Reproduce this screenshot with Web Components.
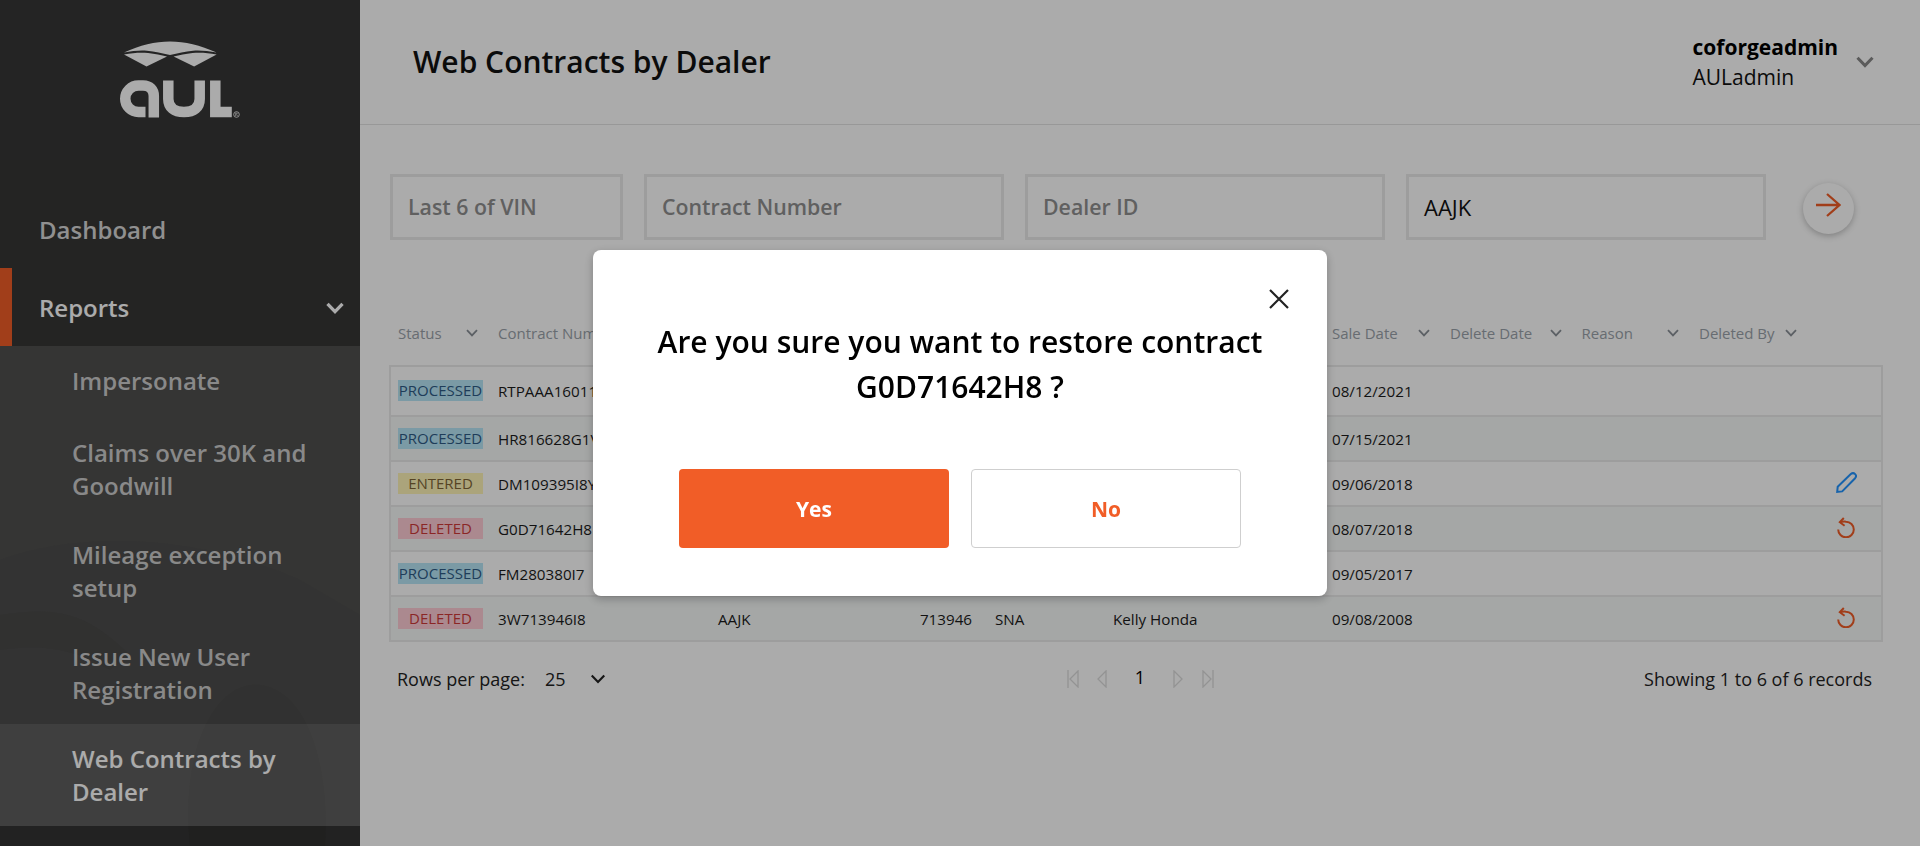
<!DOCTYPE html>
<html lang="en"><head><meta charset="utf-8"><title>Web Contracts by Dealer</title>
<style>
html,body{margin:0;padding:0;height:846px;overflow:hidden;background:#fff;font-family:"Open Sans","Noto Sans",sans-serif;color:#111}
</style></head><body>
<app-shell>
  <app-sidebar slot="side">
    <nav-item>Dashboard</nav-item>
    <nav-item active caret>Reports</nav-item>
    <sub-menu>
      <sub-item single>Impersonate</sub-item>
      <sub-item>Claims over 30K and Goodwill</sub-item>
      <sub-item>Mileage exception setup</sub-item>
      <sub-item>Issue New User Registration</sub-item>
      <sub-item current>Web Contracts by Dealer</sub-item>
    </sub-menu>
  </app-sidebar>
  <app-header slot="head" title-text="Web Contracts by Dealer" user="coforgeadmin" role="AULadmin"></app-header>
  <filter-bar slot="main">
    <filter-field style="width:233px">Last 6 of VIN</filter-field>
    <filter-field style="width:360px">Contract Number</filter-field>
    <filter-field style="width:360px">Dealer ID</filter-field>
    <filter-field style="width:360px" filled>AAJK</filter-field>
    <go-button></go-button>
  </filter-bar>
  <contract-table slot="main">
    <head-row></head-row>
    <data-row status="PROCESSED" contract="RTPAAA16011" sale="08/12/2021" first></data-row>
    <data-row status="PROCESSED" contract="HR816628G1V" sale="07/15/2021" even></data-row>
    <data-row status="ENTERED" contract="DM109395I8Y" sale="09/06/2018" action="edit"></data-row>
    <data-row status="DELETED" contract="G0D71642H8" sale="08/07/2018" action="restore" even></data-row>
    <data-row status="PROCESSED" contract="FM280380I7" sale="09/05/2017"></data-row>
    <data-row status="DELETED" contract="3W713946I8" dealer="AAJK" num="713946" state="SNA" name="Kelly Honda" sale="09/08/2008" action="restore" even last></data-row>
  </contract-table>
  <pager-bar slot="main"></pager-bar>
</app-shell>
<confirm-dialog></confirm-dialog>
<script>
const chev=(w,h,c,sw)=>`<svg width="${w}" height="${h}" viewBox="0 0 12 8" fill="none" stroke="${c}" stroke-width="${sw}" style="display:block;flex:none"><path d="M1 1.2 6 6.4 11 1.2"/></svg>`;
function def(name,render){customElements.define(name,class extends HTMLElement{connectedCallback(){if(this.shadowRoot)return;this.attachShadow({mode:'open'}).innerHTML=render(this)}})}

def('app-shell',()=>`<style>:host{display:grid;grid-template-columns:360px 1fr;grid-template-rows:125px 1fr;width:1920px;height:846px}
.s{grid-row:1/3;display:block}.m{padding:49px 37px 0 30px;display:block}</style>
<div class="s"><slot name="side"></slot></div><div><slot name="head"></slot></div><div class="m"><slot name="main"></slot></div>`);

def('app-sidebar',()=>`<style>:host{display:block;position:relative;height:846px;background:#373737;overflow:hidden}
.logo{height:160px;display:flex;justify-content:center;position:relative}
.tex{position:absolute;left:0;top:160px;width:360px;height:686px}
.nav{position:relative;padding-top:34px}</style>
<svg class="tex" viewBox="0 0 360 686" fill="none">
<rect width="360" height="686" fill="#363635"/>
<path d="M0 400C80 370 200 375 300 420L360 455V686H0Z" fill="#2f2f2f" opacity=".25"/>
<path d="M0 455C60 445 90 455 130 495L110 510C70 485 30 485 0 490Z" fill="#262626" opacity=".3"/>
<path d="M190 686C180 590 215 520 260 525C305 530 330 600 325 686Z" fill="#2a2a2a" opacity=".4"/>
</svg>
<div class="logo"><svg width="130" height="90" viewBox="110 35 130 90" style="margin-top:35px;margin-right:10px;display:block;flex:none">
<g fill="#ffffff">
<path d="M124 52.6C140 45 155 41.4 170 41.4S200 45 216.6 52.6C208 51 200 50.2 193 50.8C185 51.6 178 53.2 170 55C162 53.2 155 51.6 147 50.8C140 50.2 132 51 124 52.6Z"/>
<path d="M124 54.4C133 52.8 141 52.3 148 53C155 53.8 161 55 167 56.4L146.500 66.600Z"/>
<path d="M216.600 54.400C207.600 52.800 199.600 52.300 192.600 53C185.600 53.800 179.600 55 173.600 56.400L194.100 66.600Z"/>
</g>
<g fill="none" stroke="#fff" stroke-width="10.500">
<path d="M145.500 112H138.500A13.250 13.250 0 0 1 138.500 85.500H143C150 85.500 153.800 90 153.800 96V117.500"/>
<path d="M168.300 80.500V99C168.300 107.500 174 112 184 112S199.700 107.500 199.700 99V80.500"/>
<path d="M215.300 80.500V112H231.800"/>
</g>
<circle cx="236.500" cy="114.500" r="2.800" fill="none" stroke="#fff" stroke-width=".8"/><path d="M235.600 116V113.200H237Q237.800 114.200 236.400 114.700L237.700 116" fill="none" stroke="#fff" stroke-width=".6"/>
</svg></div>
<div class="nav"><slot></slot></div>`);

def('nav-item',e=>`<style>:host{display:block;position:relative;height:${e.hasAttribute('active')?78:74}px;box-sizing:border-box;font:600 24px/32px "Open Sans",sans-serif;color:${e.hasAttribute('active')?'#fff':'#d7d7d7'}}
.r{height:${e.hasAttribute('active')?'100%':'72px'};display:flex;align-items:center;justify-content:space-between;padding:${e.hasAttribute('active')?'2px':'0'} 16px 0 39px;box-sizing:border-box;${e.hasAttribute('active')?'border-left:12px solid #f15d27;padding-left:27px;':''}}</style>
<div class="r"><span><slot></slot></span>${e.hasAttribute('caret')?chev(18,12,'#fff',2.2):''}</div>`);
def('sub-menu',()=>`<style>:host{display:block;background:rgba(255,255,255,.125)}</style><slot></slot>`);
def('sub-item',e=>`<style>:host{display:block;padding:18px 20px ${e.hasAttribute('single')?'21px':'18px'} 72px;font:600 24px/33px "Open Sans",sans-serif;color:${e.hasAttribute('current')?'#fff':'#cdcdcd'};${e.hasAttribute('current')?'background:rgba(255,255,255,.1);':''}}</style><slot></slot>`);

def('app-header',e=>`<style>:host{display:flex;height:125px;box-sizing:border-box;border-bottom:1px solid #e3e3e3;align-items:center;justify-content:space-between;padding:0 46px 0 53px}
h1{margin:0;font:600 30px/40px "Open Sans",sans-serif;color:#111}
.u{display:flex;align-items:center;gap:18px}.n{font:700 21px/26px "Open Sans",sans-serif;color:#000}.r{font:400 21px/26px "Open Sans",sans-serif;color:#111;margin-top:4px}</style>
<h1>${e.getAttribute('title-text')}</h1><div class="u"><div><div class="n">${e.getAttribute('user')}</div><div class="r">${e.getAttribute('role')}</div></div>${chev(18,12,'#888',2)}</div>`);

def('filter-bar',()=>`<style>:host{display:flex;gap:21px;align-items:center;height:66px}</style><slot></slot>`);
def('filter-field',e=>`<style>:host{display:flex;align-items:center;flex:none;height:66px;box-sizing:border-box;border:3px solid #ebebeb;padding-left:15px;font:${e.hasAttribute('filled')?'500 22px':'600 21.300px'}/28px "Open Sans",sans-serif;color:${e.hasAttribute('filled')?'#111':'#8f8f8f'}}</style><slot></slot>`);
def('go-button',()=>`<style>:host{display:flex;flex:none;width:51px;height:51px;border-radius:50%;background:#fff;box-shadow:0 2px 6px rgba(0,0,0,.25);align-items:center;justify-content:center;margin:2px 0 0 16px}</style>
<svg width="26" height="24" viewBox="0 0 26 24" fill="none" stroke="#f15d27" stroke-width="2.300" style="margin:-6px 0 0 -2px"><path d="M1 12H24M12 1 24.500 12 12 23"/></svg>`);

const COLS='100px 219px 150px 105px 23px 118px 219px 118px 131.500px 117.500px 118px 58px';
def('contract-table',()=>`<style>:host{display:block;margin-top:60px;--cols:${COLS}}</style><slot></slot>`);
def('head-row',()=>{const cell=(t,ch=true)=>`<div class="c"><span>${t}</span>${ch?chev(12,8,'#8a9097',1.800):''}</div>`;
return `<style>:host{display:grid;grid-template-columns:var(--cols);padding-left:8px;height:65px;box-sizing:border-box;align-items:center;font:400 15px/20px "Open Sans",sans-serif;color:#9aa2aa}
.c{display:flex;justify-content:space-between;align-items:center;padding-right:20px;white-space:nowrap}</style>
${cell('Status')}${cell('Contract Number',false)}<div></div><div></div><div></div><div></div><div></div>${cell('Sale Date')}${cell('Delete Date')}${cell('Reason')}${cell('Deleted By')}<div></div>`});
def('status-badge',e=>{const m={PROCESSED:['#b8e6f6','#2f5c86'],ENTERED:['#fff5b8','#806637'],DELETED:['#ffcdd6','#cf3a3a']}[e.textContent.trim()];
return `<style>:host{display:inline-block;width:85px;height:21px;text-align:center;background:${m[0]};color:${m[1]};font:500 15px/21px "Open Sans",sans-serif;white-space:nowrap}</style><slot></slot>`});
def('data-row',e=>{const a=n=>e.getAttribute(n)||'';const last=e.hasAttribute('last'),first=e.hasAttribute('first');
const edit=`<svg width="21" height="21" viewBox="0 0 21 21" fill="none" stroke="#2394ff" stroke-width="2" style="display:block;margin:-2px auto 0"><path d="M1.200 19.800 1.700 14.800 14.800 2C16.300.8 18 1 19.100 2.100S20.300 4.800 19.100 6.200L6.200 19.400Z"/></svg>`;
const rest=`<svg width="19" height="21" viewBox="0 0 19 21" fill="none" stroke="#f15d27" stroke-width="2" style="display:block;margin:-2px auto 0"><path d="M6.800 1 2.800 5.200 7.600 8.800"/><path d="M3 5.200C4.800 4.700 7 4.500 9 4.700A7.800 7.800 0 1 1 1.200 12.500"/></svg>`;
return `<style>:host{display:grid;grid-template-columns:var(--cols);box-sizing:border-box;height:${first?50:last?47:45}px;align-items:center;border:2px solid #ebebeb;border-bottom-width:${last?'2px':'0'};padding:0 0 ${first?1:0}px 7px;margin-left:-1px;${e.hasAttribute('even')?'background:#f6f9f8;':''}
font:500 15.200px/20px "Open Sans",sans-serif;color:#1c1c1c;white-space:nowrap}
.n{text-align:right}</style>
<div style="display:flex"><status-badge>${a('status')}</status-badge></div><div>${a('contract')}</div><div style="padding-left:1px">${a('dealer')}</div><div class="n">${a('num')}</div><div></div><div>${a('state')}</div><div>${a('name')}</div><div>${a('sale')}</div><div></div><div></div><div></div><div>${a('action')=='edit'?edit:a('action')=='restore'?rest:''}</div>`});

def('pager-bar',()=>{const ic=(d)=>`<svg width="12" height="18" viewBox="0 0 12 18" fill="none" stroke="#dcdcdc" stroke-width="1.300" style="display:block">${d}</svg>`;
return `<style>:host{display:grid;grid-template-columns:1fr auto 1fr;align-items:center;height:30px;margin-top:22px;padding:0 11px 0 7px;font:400 18px/24px "Open Sans",sans-serif;color:#222}
.l{display:flex;align-items:center}.v{margin-left:20px;width:45px}.p{display:flex;align-items:center;gap:17.500px;margin-left:11px}.one{width:64px;margin:0 -17.500px;text-align:center;color:#000;font-weight:500;position:relative;top:-2px}.r{text-align:right}</style>
<div class="l"><span>Rows per page:</span><span class="v">25</span>${chev(16,10,'#222',1.700)}</div>
<div class="p">${ic('<path d="M1 0V18M11 1 3 9 11 17Z"/>')}${ic('<path d="M10 1 2 9 10 17Z"/>')}<span class="one">1</span>${ic('<path d="M2 1 10 9 2 17Z"/>')}${ic('<path d="M11 0V18M1 1 9 9 1 17Z"/>')}</div>
<div class="r">Showing 1 to 6 of 6 records</div>`});

def('confirm-dialog',()=>`<style>:host{position:fixed;inset:0;display:flex;align-items:center;justify-content:center;background:rgba(0,0,0,.33);z-index:10}
.box{width:734px;height:346px;box-sizing:border-box;background:#fff;border-radius:8px;box-shadow:0 3px 10px rgba(0,0,0,.25);padding:39px 38px 0 0;display:flex;flex-direction:column}
.x{align-self:flex-end;display:block}
p{margin:9.500px 0 0 38px;text-align:center;font:600 30px/45px "Open Sans",sans-serif;color:#000;white-space:nowrap}
.b{display:flex;justify-content:center;gap:22px;margin:60.500px 0 0 38px}
.btn{width:270px;height:79px;box-sizing:border-box;border-radius:4px;display:flex;align-items:center;justify-content:center;font:700 21px/28px "Open Sans",sans-serif}
.y{background:#f15d27;color:#fff}.no{background:#fff;color:#f15d27;border:1px solid #cfcfcf}</style>
<div class="box"><svg class="x" width="20" height="20" viewBox="0 0 20 20" stroke="#222" stroke-width="2.200"><path d="M1 1 19 19M19 1 1 19"/></svg>
<p>Are you sure you want to restore contract<br>G0D71642H8 ?</p>
<div class="b"><div class="btn y">Yes</div><div class="btn no">No</div></div></div>`);
</script>
</body></html>
